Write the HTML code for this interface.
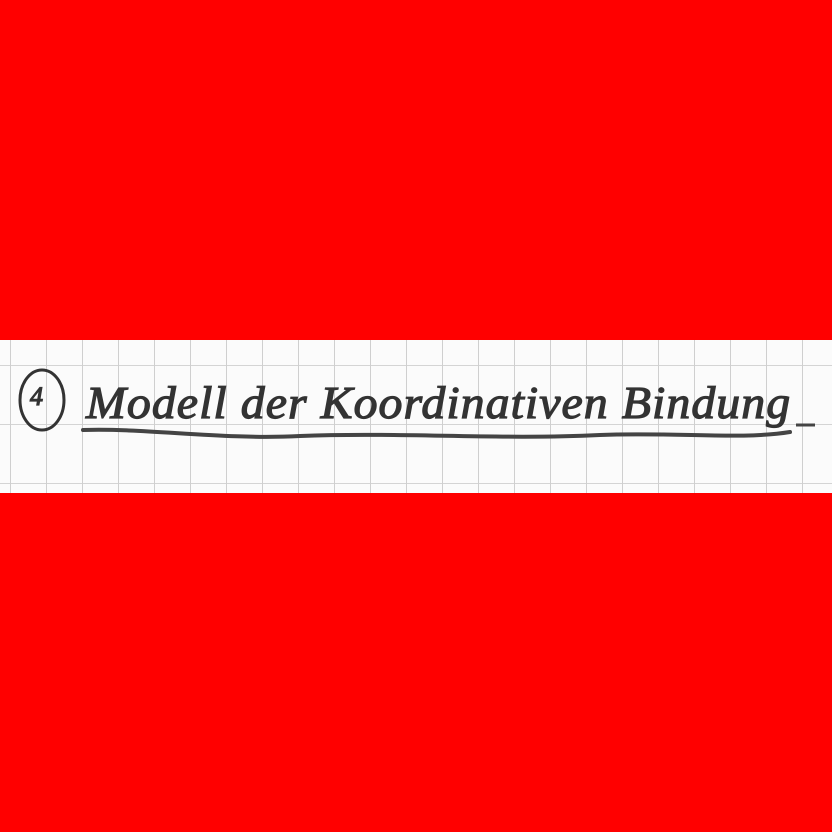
<!DOCTYPE html>
<html><head><meta charset="utf-8"><style>
html,body{margin:0;padding:0;width:832px;height:832px;background:#ff0000;overflow:hidden}
.strip{position:absolute;left:0;top:340px;width:832px;height:153px;background:#fbfbfb;
background-image:linear-gradient(to right,#cfcfcf 1px,transparent 1px),linear-gradient(to bottom,#d4d4d4 1px,transparent 1px);
background-size:36px 59px;background-position:10px 25px}
.t{position:absolute;font-family:"Liberation Serif",serif;font-style:italic;color:#333;white-space:nowrap;-webkit-text-stroke:1.2px #333}
</style></head><body>
<div class="strip"></div>
<svg style="position:absolute;left:0;top:0" width="832" height="832">
<ellipse cx="42" cy="400" rx="22" ry="30" fill="none" stroke="#333" stroke-width="3"/>
<path d="M83 430 C150 428 220 440 300 436 C400 432 500 440 600 435 C680 432 740 440 790 432" fill="none" stroke="#444" stroke-width="4" stroke-linecap="round"/>
<path d="M796 425 L815 425" stroke="#444" stroke-width="3"/>
</svg>
<div class="t" style="left:30px;top:382px;font-size:26px">4</div>
<div class="t" style="left:86px;top:376px;font-size:46px;letter-spacing:1px;transform:scaleX(1.04);transform-origin:left">Modell der Koordinativen Bindung</div>
</body></html>
